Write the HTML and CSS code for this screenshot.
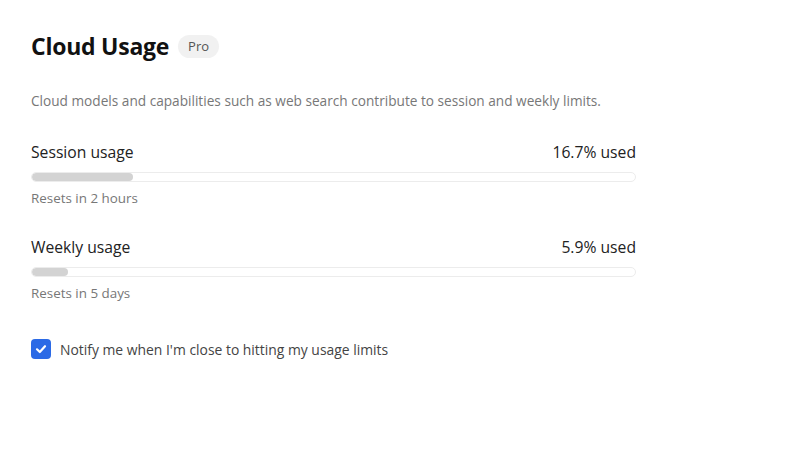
FILE: index.html
```html
<!DOCTYPE html>
<html>
<head>
<meta charset="utf-8">
<link rel="stylesheet" href="styles.css">
</head>
<body>
<div class="page">
  <div class="header">
    <h1 class="title">Cloud Usage</h1>
    <span class="badge">Pro</span>
  </div>
  <p class="desc">Cloud models and capabilities such as web search contribute to session and weekly limits.</p>
  <div class="usage session">
    <div class="row"><span class="label">Session usage</span><span class="value">16.7% used</span></div>
    <div class="track"><div class="fill" style="width:16.7%"></div></div>
    <div class="reset">Resets in 2 hours</div>
  </div>
  <div class="usage weekly">
    <div class="row"><span class="label">Weekly usage</span><span class="value">5.9% used</span></div>
    <div class="track"><div class="fill" style="width:5.9%"></div></div>
    <div class="reset">Resets in 5 days</div>
  </div>
  <label class="notify">
    <span class="box"><svg width="14" height="14" viewBox="0 0 14 14"><path d="M3 7.3 L5.8 10 L11 4.2" fill="none" stroke="#fff" stroke-width="2.2" stroke-linecap="round" stroke-linejoin="round"/></svg></span>
    <span class="notify-text">Notify me when I'm close to hitting my usage limits</span>
  </label>
</div>
</body>
</html>
```
FILE: styles.css
```css
* { box-sizing: border-box; }
html, body { margin: 0; padding: 0; background: #fff; }
body { font-family: "Open Sans", "Noto Sans", sans-serif; color: #1a1a1a; }
.page { width: 605px; margin-left: 31px; padding-top: 30px; display: flex; flex-direction: column; }
.header { display: flex; align-items: center; gap: 9px; height: 32px; }
.title { margin: 0; font-size: 23px; font-weight: 700; color: #111; letter-spacing: -0.25px; }
.badge { background: #f1f1f1; color: #555; font-size: 13px; border-radius: 12px; padding: 2px 10px; line-height: 19px; }
.desc { margin: 0; margin-top: 30px; font-size: 13.65px; color: #777; line-height: 18px; }
.usage { display: flex; flex-direction: column; }
.session { margin-top: 31px; }
.weekly { margin-top: 29px; }
.row { display: flex; justify-content: space-between; font-size: 15.7px; line-height: 22px; color: #222; }
.track { margin-top: 9px; height: 10px; border: 1px solid #ececec; border-radius: 6px; background: #fff; overflow: hidden; }
.fill { height: 100%; background: #d3d3d3; border-radius: 6px; }
.reset { margin-top: 7px; font-size: 13.4px; color: #777; line-height: 18px; }
.notify { margin-top: 37px; display: flex; align-items: center; gap: 9px; }
.box { width: 20px; height: 20px; border-radius: 4px; background: #2b6ae6; display: flex; align-items: center; justify-content: center; }
.notify-text { font-size: 13.9px; color: #444; }
```
